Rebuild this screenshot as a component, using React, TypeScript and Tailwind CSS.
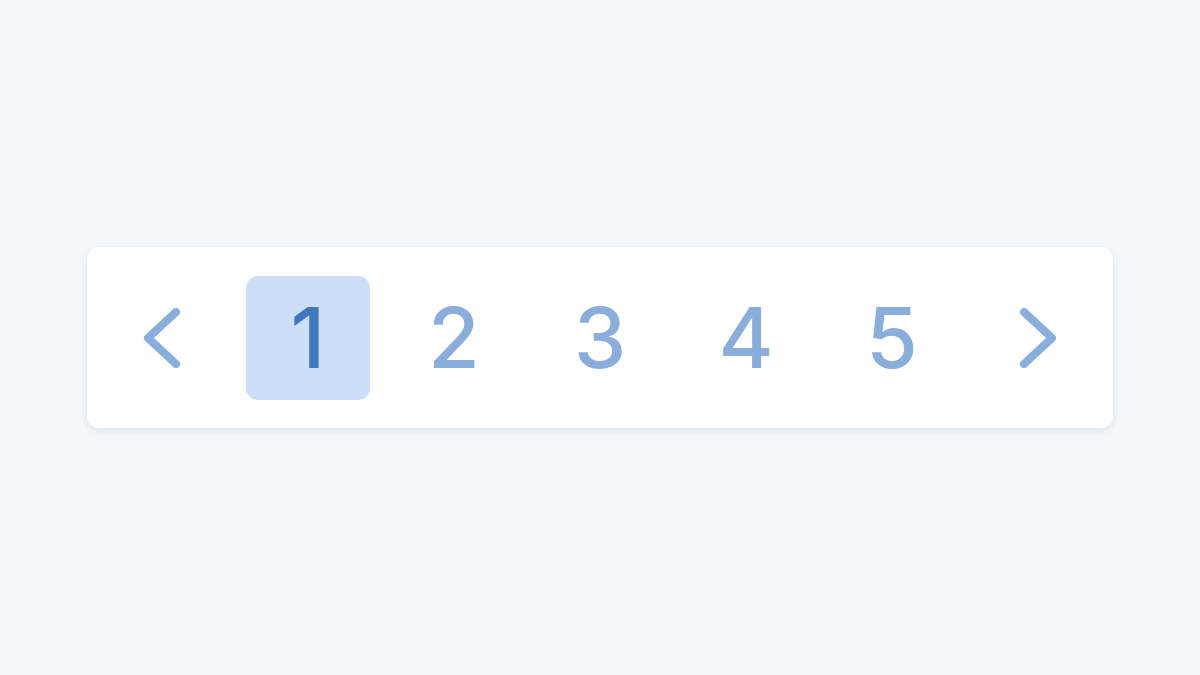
import React from 'react';

const pages = [1, 2, 3, 4, 5];

function Chevron({ dir }: { dir: 'left' | 'right' }) {
    return (
        <svg width="48" height="72" viewBox="0 0 48 72" fill="none" className={dir === 'right' ? 'rotate-180' : ''}>
            <path d="M38 10 L10 36 L38 62" stroke="#8aaedb" strokeWidth="8" strokeLinecap="round" strokeLinejoin="round" />
        </svg>
    );
}

export default function App() {
    return (
        <div className="w-[1200px] h-[675px] bg-[#f1f7fa] flex items-center justify-center font-['Inter','Liberation_Sans',sans-serif]">
            <div className="w-[1026px] h-[181px] bg-white rounded-[12px] shadow-[0_3px_6px_rgba(90,110,130,0.12)] flex items-center justify-center gap-[22px]">
                <div className="w-[124px] h-[124px] flex items-center justify-center">
                    <Chevron dir="left" />
                </div>
                {pages.map((p) => (
                    <div
                        key={p}
                        className={`w-[124px] h-[124px] rounded-[12px] flex items-center justify-center text-[84px] leading-none font-medium ${
                            p === 1 ? 'bg-[#cddff7] text-[#3f77c3]' : 'text-[#8aaedb]'
                        }`}
                    >
                        {p}
                    </div>
                ))}
                <div className="w-[124px] h-[124px] flex items-center justify-center">
                    <Chevron dir="right" />
                </div>
            </div>
        </div>
    );
}
